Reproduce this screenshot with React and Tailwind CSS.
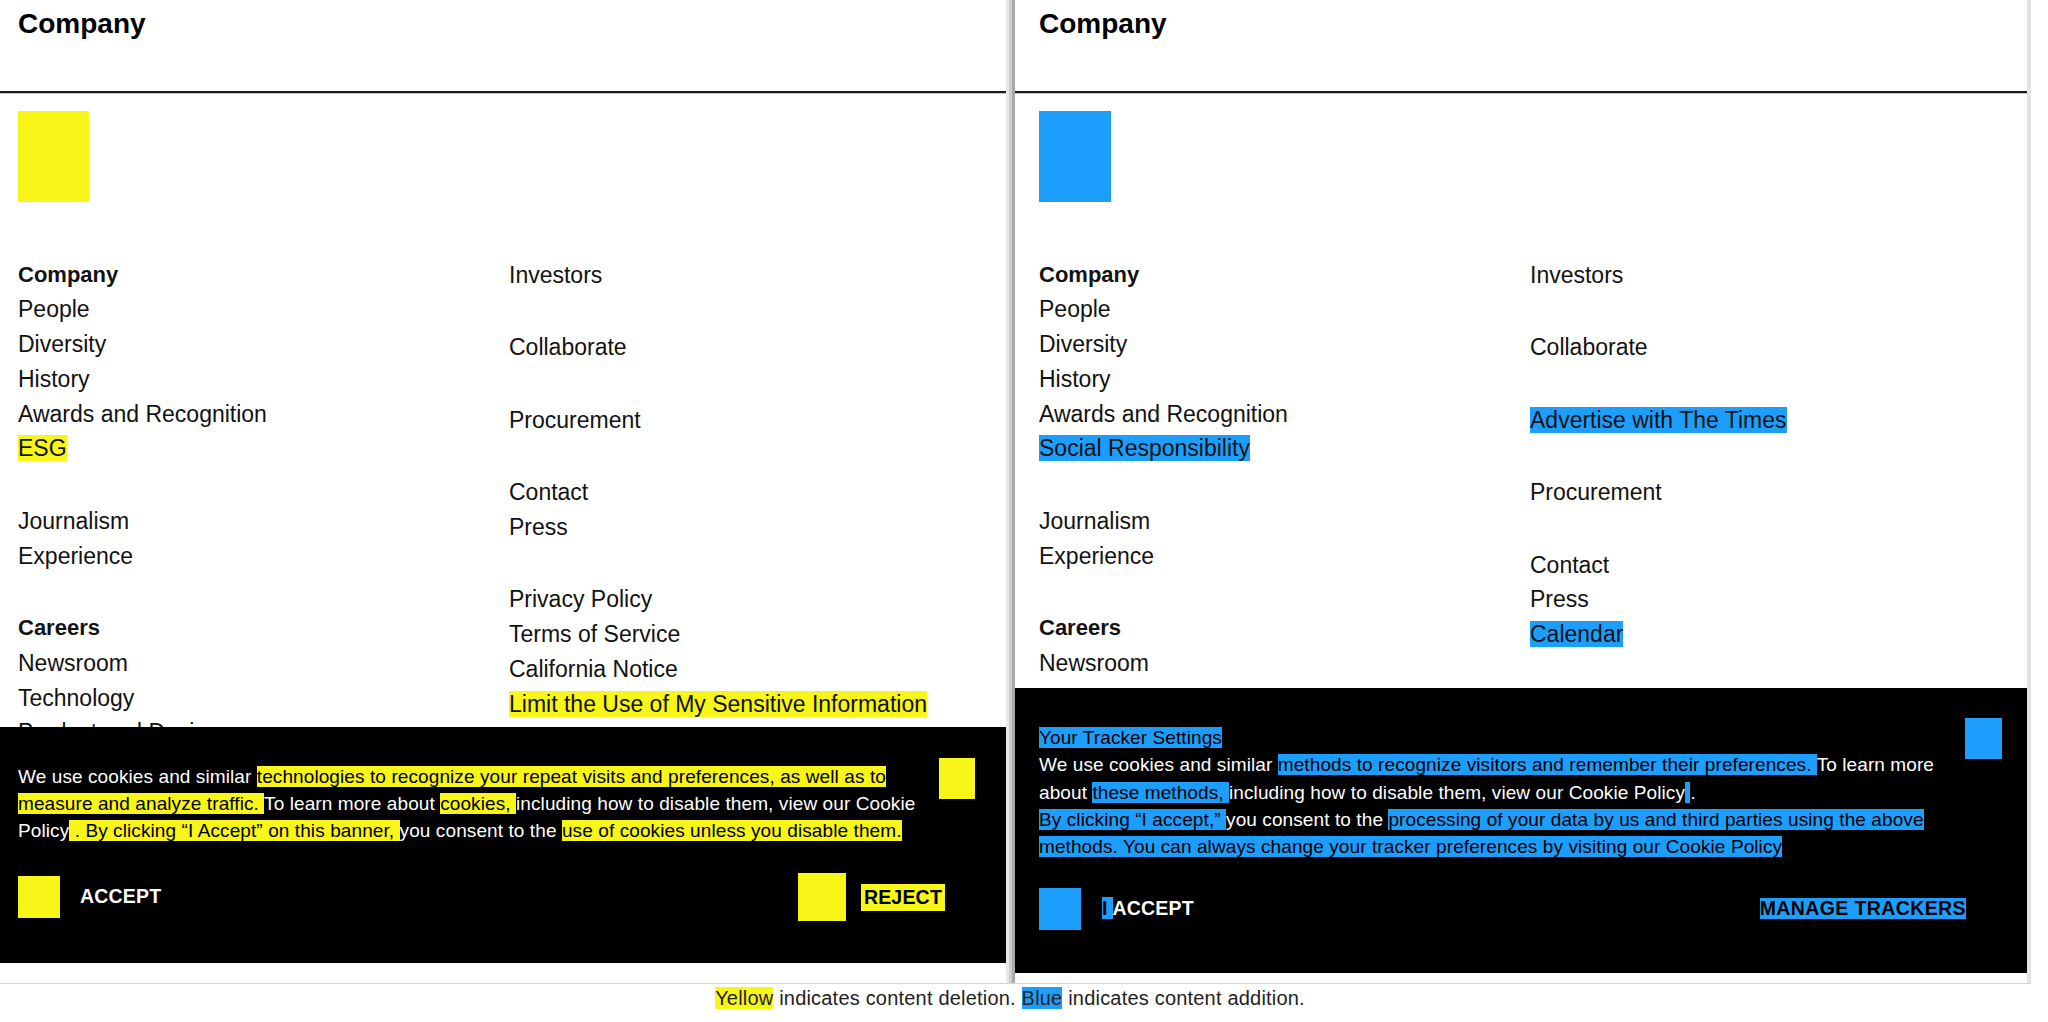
import React from 'react';

const YELLOW = 'bg-[#f8f518]';
const BLUE = 'bg-[#1d9efc]';

function Mark({ color, children }) {
  return <span className={`${color} text-black`}>{children}</span>;
}

function LinkList({ columns, color }) {
  return (
    <div className="grid grid-cols-[491px_1fr] mt-[55.5px] text-[23px] text-[#121212] leading-[34.75px]">
      {columns.map((groups, ci) => (
        <div key={ci} className="flex flex-col gap-[37.75px]">
          {groups.map((items, gi) => (
            <div key={gi} className="flex flex-col">
              {items.map((item) => (
                <div key={item.label} className={item.bold ? 'font-bold text-[22px]' : ''}>
                  {item.hl ? <span className={color}>{item.label}</span> : item.label}
                </div>
              ))}
            </div>
          ))}
        </div>
      ))}
    </div>
  );
}

const t = (label, extra = {}) => ({ label, ...extra });

// only the links that show above the cookie banner are listed
const leftColumns = [
  [
    [t('Company', { bold: true }), t('People'), t('Diversity'), t('History'), t('Awards and Recognition'), t('ESG', { hl: true })],
    [t('Journalism'), t('Experience')],
    [t('Careers', { bold: true }), t('Newsroom'), t('Technology'), t('Product and Design')],
  ],
  [
    [t('Investors')],
    [t('Collaborate')],
    [t('Procurement')],
    [t('Contact'), t('Press')],
    [t('Privacy Policy'), t('Terms of Service'), t('California Notice'), t('Limit the Use of My Sensitive Information', { hl: true })],
  ],
];

const rightColumns = [
  [
    [t('Company', { bold: true }), t('People'), t('Diversity'), t('History'), t('Awards and Recognition'), t('Social Responsibility', { hl: true })],
    [t('Journalism'), t('Experience')],
    [t('Careers', { bold: true }), t('Newsroom')],
  ],
  [
    [t('Investors')],
    [t('Collaborate')],
    [t('Advertise with The Times', { hl: true })],
    [t('Procurement')],
    [t('Contact'), t('Press'), t('Calendar', { hl: true })],
  ],
];

function PageTop({ pad, color, boxW, columns }) {
  return (
    <>
      <div className={`h-[91px] ${pad} pt-[7px]`}>
        <h1 className="text-[28px] font-bold leading-[34px] text-black">Company</h1>
      </div>
      <div className="h-[2px] bg-[#1a1a1a]" />
      <div className="h-px bg-[#c4c4c4]" />
      <div className={pad}>
        <div className={`${color} ${boxW} h-[91px] mt-[17px]`} />
        <LinkList columns={columns} color={color} />
      </div>
    </>
  );
}

function OldBanner() {
  return (
    <div className="absolute left-0 right-0 top-[727px] h-[236px] bg-black pl-[18px] pt-[36px]">
      <div className="flex">
        <p className="w-[915px] text-[19px] leading-[27px] text-white tracking-[0.005em]">
          We use cookies and similar{' '}
          <Mark color={YELLOW}>technologies to recognize your repeat visits and preferences, as well as to measure and analyze traffic. </Mark>
          To learn more about <Mark color={YELLOW}>cookies, </Mark>
          including how to disable them, view our Cookie Policy
          <Mark color={YELLOW}>&nbsp;. By clicking “I Accept” on this banner, </Mark>
          you consent to the <Mark color={YELLOW}>use of cookies unless you disable them.</Mark>
        </p>
        <div className={`${YELLOW} w-[36px] h-[41px] ml-[6px] -mt-[5.5px]`} />
      </div>
      <div className="flex items-center justify-between w-[927px] h-[48px] mt-[29px]">
        <div className="flex items-center gap-[20px]">
          <div className={`${YELLOW} w-[42px] h-[42px]`} />
          <span className="text-white font-bold text-[19.5px] tracking-[0.01em]">ACCEPT</span>
        </div>
        <div className="flex items-center gap-[15px]">
          <div className={`${YELLOW} w-[48px] h-[48px]`} />
          <span className={`${YELLOW} text-black font-bold text-[19.5px] leading-[27px] px-[3px] tracking-[0.01em]`}>REJECT</span>
        </div>
      </div>
    </div>
  );
}

function NewBanner() {
  return (
    <div className="absolute left-0 right-0 top-[688px] h-[285px] bg-black pl-[24px] pt-[36px]">
      <div className="flex">
        <div className="w-[905px] text-[19px] leading-[27.3px] text-white tracking-[0.005em]">
          <p><Mark color={BLUE}>Your Tracker Settings</Mark></p>
          <p>
            We use cookies and similar{' '}
            <Mark color={BLUE}>methods to recognize visitors and remember their preferences. </Mark>
            To learn more about <Mark color={BLUE}>these methods, </Mark>
            including how to disable them, view our Cookie Policy<Mark color={BLUE}>&nbsp;</Mark>.
          </p>
          <p>
            <Mark color={BLUE}>By clicking “I accept,” </Mark>
            you consent to the{' '}
            <Mark color={BLUE}>processing of your data by us and third parties using the above methods. You can always change your tracker preferences by visiting our Cookie Policy</Mark>
          </p>
        </div>
        <div className={`${BLUE} w-[37px] h-[41px] ml-[21px] -mt-[6px]`} />
      </div>
      <div className="flex items-center justify-between w-[927px] h-[42px] mt-[27.5px]">
        <div className="flex items-center gap-[21px]">
          <div className={`${BLUE} w-[42px] h-[42px]`} />
          <span className="text-white font-bold text-[19.5px] tracking-[0.01em]">
            <span className={`${BLUE} text-black`}>I </span>ACCEPT
          </span>
        </div>
        <span className={`${BLUE} text-black font-bold text-[19.5px] leading-[21px] tracking-[0.02em]`}>MANAGE TRACKERS</span>
      </div>
    </div>
  );
}

export default function App() {
  return (
    <div className="w-[2048px] h-[1022px] overflow-hidden bg-white font-['Liberation_Sans',Arial,sans-serif]">
      <div className="flex h-[984px] w-[2031px] border-b border-[#d6d6d6]">
        <div className="relative w-[1006px] h-full overflow-hidden bg-white">
          <PageTop pad="pl-[18px]" color={YELLOW} boxW="w-[71px]" columns={leftColumns} />
          <OldBanner />
        </div>
        <div className="flex w-[9px] h-full">
          <div className="w-[3px] bg-[#e8e8e8]" />
          <div className="w-[3px] bg-[#cdcdcd]" />
          <div className="w-[3px] bg-[#a9a9a9]" />
        </div>
        <div className="relative w-[1016px] h-full overflow-hidden bg-white border-r-4 border-[#e3e3e3]">
          <PageTop pad="pl-[24px]" color={BLUE} boxW="w-[72px]" columns={rightColumns} />
          <NewBanner />
        </div>
      </div>
      <div className="w-[2020px] flex justify-center pt-[3px] text-[20px] leading-[23px] tracking-[0.01em] text-[#222]">
        <p>
          <span className={YELLOW}>Yellow</span> indicates content deletion. <span className={BLUE}>Blue</span> indicates content addition.
        </p>
      </div>
    </div>
  );
}
